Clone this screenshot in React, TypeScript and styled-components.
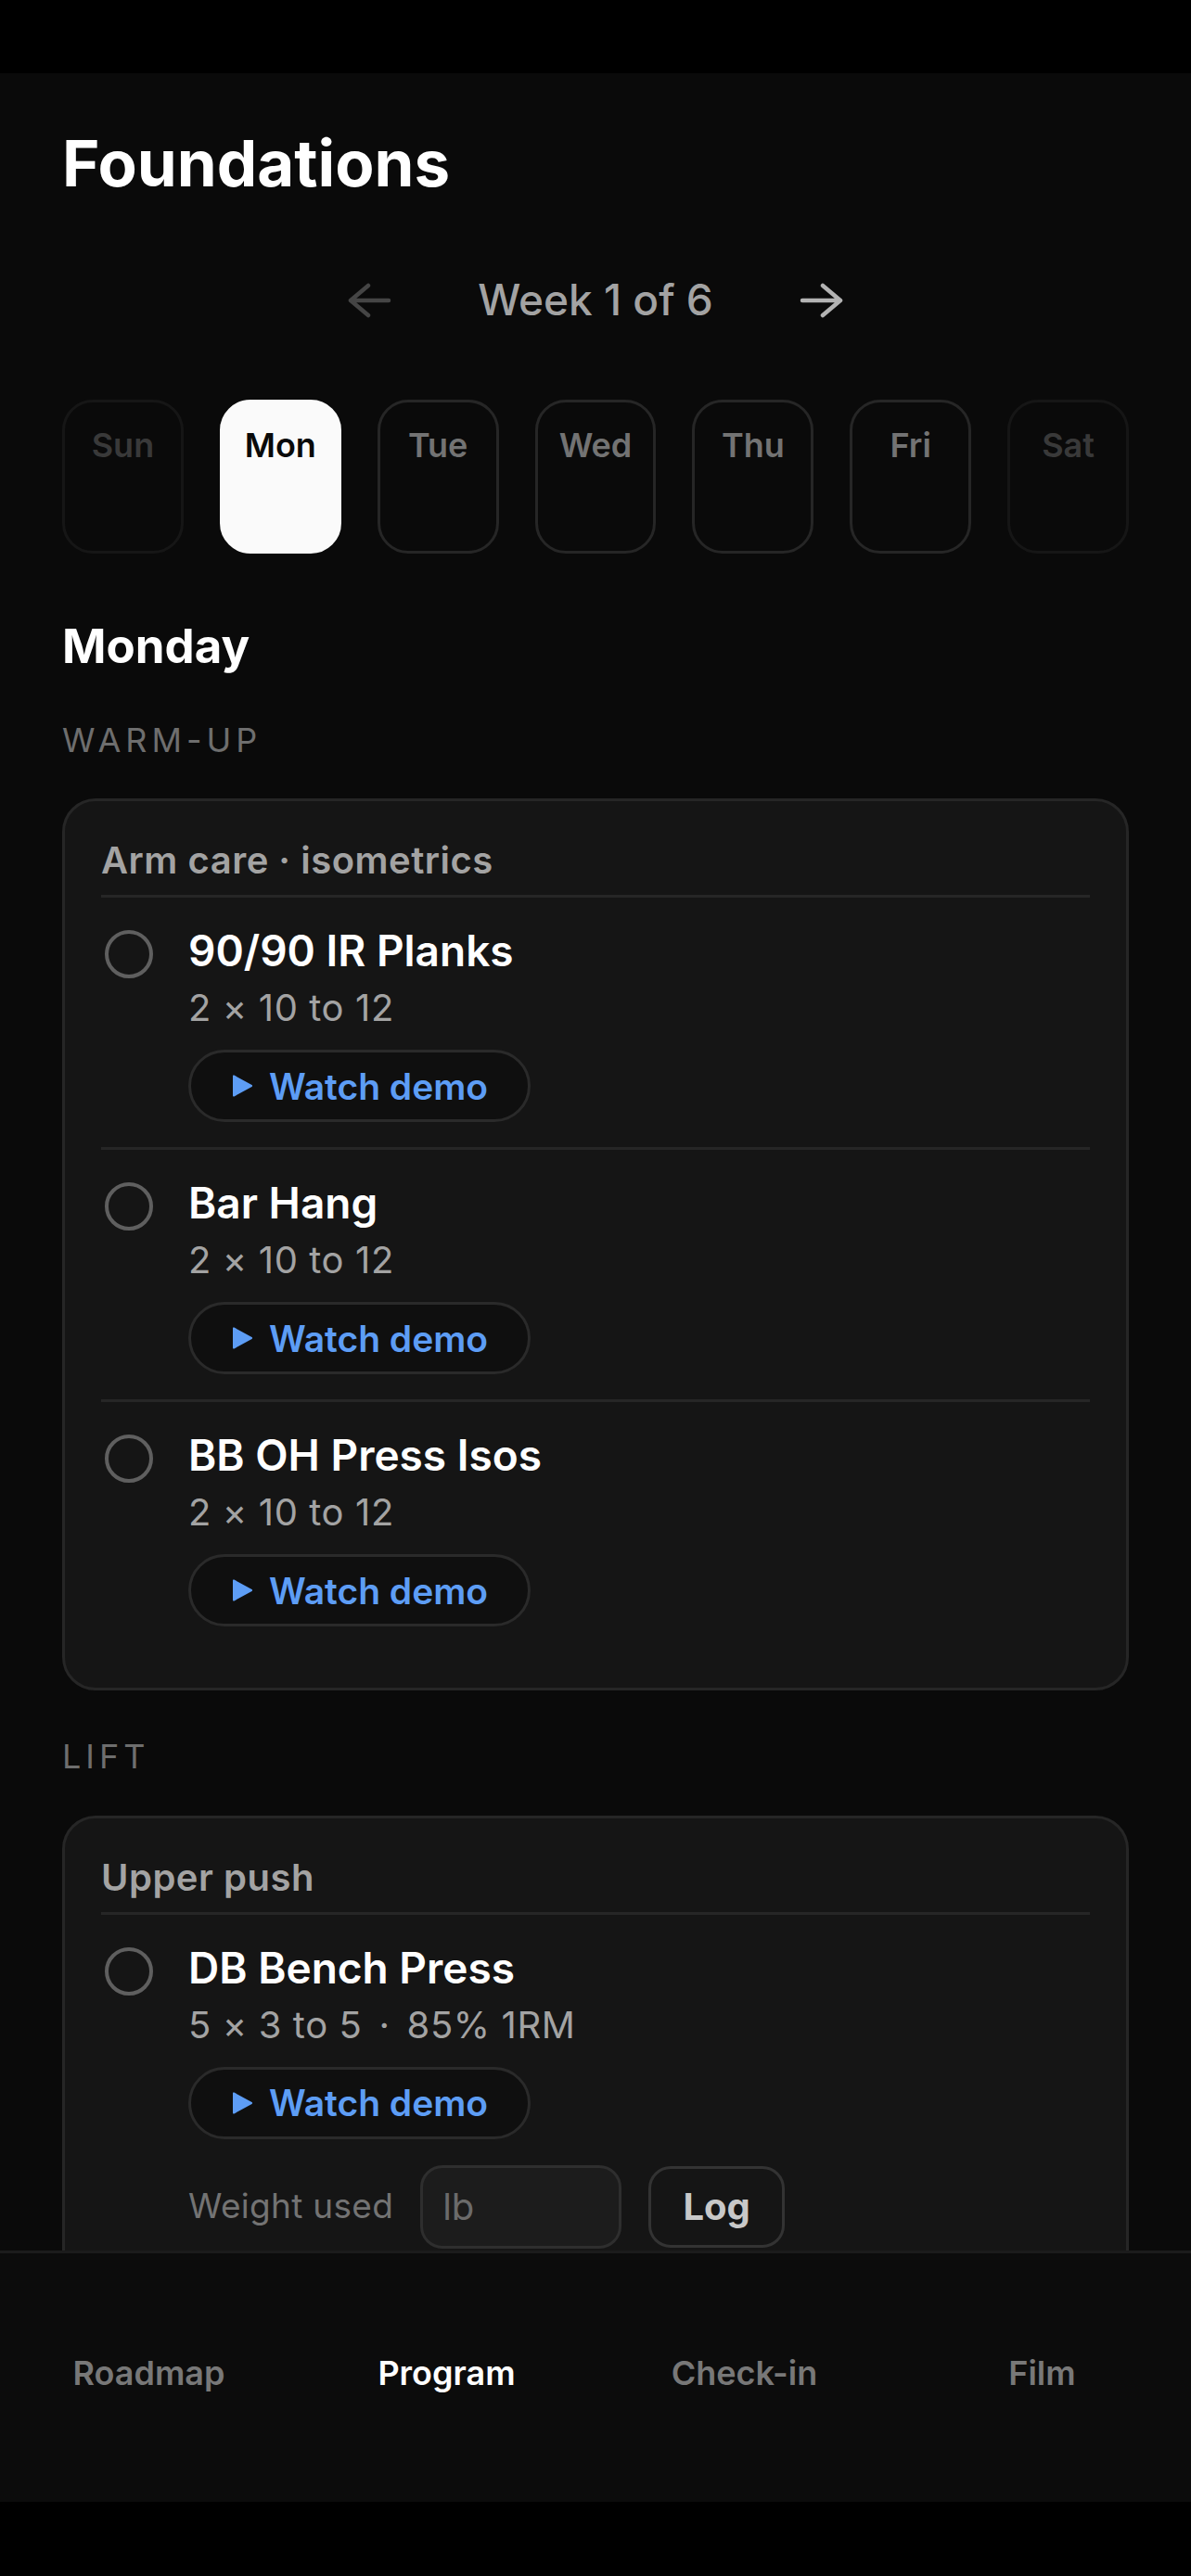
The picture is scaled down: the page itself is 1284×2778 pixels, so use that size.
import React from 'react';
import styled, { createGlobalStyle } from 'styled-components';

const GlobalStyle = createGlobalStyle`
  html, body {
    margin: 0;
    padding: 0;
    background: #000;
  }
  body {
    font-family: Inter, "Noto Sans", "Liberation Sans", sans-serif;
    -webkit-font-smoothing: antialiased;
  }
  * {
    box-sizing: border-box;
  }
`;

const Screen = styled.div`
  width: 1284px;
  height: 2778px;
  display: flex;
  flex-direction: column;
  background: #000;
  overflow: hidden;
`;

const StatusBar = styled.div`
  height: 79px;
  flex-shrink: 0;
  background: #000;
`;

const Scroll = styled.main`
  flex: 1;
  min-height: 0;
  overflow: hidden;
  background: #0a0a0a;
  padding: 57px 67px 0;
`;

const Title = styled.h1`
  margin: 0;
  font-size: 69px;
  line-height: 81px;
  font-weight: 700;
  color: #fff;
`;

const WeekNav = styled.div`
  margin-top: 79px;
  height: 55px;
  display: flex;
  align-items: center;
  justify-content: center;
  gap: 93px;
`;

const WeekLabel = styled.span`
  font-size: 46px;
  line-height: 1.2;
  font-weight: 500;
  color: #a3a3a3;
`;

const ArrowButton = styled.button<{ $disabled?: boolean }>`
  width: 47px;
  height: 38px;
  padding: 0;
  border: 0;
  background: none;
  display: flex;
  color: ${(p) => (p.$disabled ? '#454545' : '#b3b3b3')};
`;

const DayGrid = styled.div`
  margin-top: 80px;
  display: grid;
  grid-template-columns: repeat(7, 1fr);
  gap: 39px;
`;

const DayPill = styled.div<{ $active?: boolean; $muted?: boolean }>`
  height: 166px;
  border-radius: 33px;
  border: 3px solid ${(p) => (p.$active ? '#fafafa' : '#262626')};
  background: ${(p) => (p.$active ? '#fafafa' : 'transparent')};
  color: ${(p) => (p.$active ? '#0a0a0a' : '#737373')};
  opacity: ${(p) => (p.$muted ? 0.45 : 1)};
  display: flex;
  justify-content: center;
  padding-top: 25px;
  font-size: 36px;
  line-height: 1.2;
  font-weight: 600;
`;

const DayTitle = styled.h2`
  margin: 69px 0 0;
  font-size: 51px;
  line-height: 1.2;
  font-weight: 700;
  color: #fff;
`;

const SectionLabel = styled.div`
  margin: 50px 0 41px;
  font-size: 36px;
  line-height: 1.2;
  font-weight: 400;
  letter-spacing: 5px;
  color: #6e6e6e;
  text-transform: uppercase;
`;

const Card = styled.section`
  border: 3px solid #262626;
  border-radius: 36px;
  background: #151515;
  padding: 40px 39px 39px;
`;

const CardHeader = styled.div`
  font-size: 40px;
  line-height: 47px;
  font-weight: 600;
  letter-spacing: 0.5px;
  color: #a3a3a3;
  padding-bottom: 14px;
  border-bottom: 3px solid #262626;
`;

const Row = styled.div`
  display: flex;
  gap: 38px;
  padding: 30px 0 27px 4px;
  border-bottom: 3px solid #262626;

  &:last-child {
    border-bottom: 0;
  }
`;

const Check = styled.span`
  width: 52px;
  height: 52px;
  margin-top: 5px;
  flex-shrink: 0;
  border-radius: 50%;
  border: 4.5px solid #5f5f5f;
`;

const RowBody = styled.div`
  display: flex;
  flex-direction: column;
  align-items: flex-start;
`;

const ExName = styled.div`
  font-size: 46px;
  line-height: 54px;
  font-weight: 600;
  color: #fff;
`;

const ExSets = styled.div`
  margin-top: 11px;
  font-size: 40px;
  line-height: 47px;
  letter-spacing: 0.6px;
  color: #a3a3a3;
`;

const Dot = styled.span`
  padding: 0 18px;
`;

const DemoButton = styled.button`
  margin-top: 22px;
  height: 78px;
  padding: 0 43px;
  display: inline-flex;
  align-items: center;
  gap: 16px;
  border: 3px solid #2a2a2a;
  border-radius: 39px;
  background: #0f0f0f;
  color: #5d9df5;
  font-family: inherit;
  font-size: 39px;
  font-weight: 600;
`;

const WeightRow = styled.div`
  margin-top: 28px;
  display: flex;
  align-items: center;
  gap: 29px;
`;

const WeightLabel = styled.span`
  font-size: 37px;
  line-height: 1.2;
  letter-spacing: 0.3px;
  color: #737373;
`;

const WeightInput = styled.input`
  width: 217px;
  height: 90px;
  padding: 0 21px;
  border: 3px solid #2e2e2e;
  border-radius: 24px;
  background: #1c1c1c;
  color: #fff;
  font-family: inherit;
  font-size: 40px;
  outline: none;

  &::placeholder {
    color: #6b6b6b;
  }
`;

const LogButton = styled.button`
  width: 147px;
  height: 88px;
  border: 3px solid #333;
  border-radius: 24px;
  background: transparent;
  color: #c8c8c8;
  font-family: inherit;
  font-size: 40px;
  font-weight: 700;
`;

const TabBar = styled.nav`
  height: 271px;
  flex-shrink: 0;
  display: grid;
  grid-template-columns: repeat(4, 1fr);
  align-items: center;
  padding-bottom: 10px;
  background: #0c0c0c;
  border-top: 3px solid #1c1c1c;
`;

const Tab = styled.span<{ $active?: boolean }>`
  text-align: center;
  font-size: 36px;
  font-weight: 600;
  color: ${(p) => (p.$active ? '#fff' : '#787878')};
`;

const HomeArea = styled.div`
  height: 80px;
  flex-shrink: 0;
  background: #000;
`;

const Arrow = ({ dir }: { dir: 'left' | 'right' }) => (
  <svg width="47" height="38" viewBox="0 0 47 38" fill="none" stroke="currentColor" strokeWidth="4.5" strokeLinecap="round" strokeLinejoin="round">
    {dir === 'left' ? (
      <path d="M44 19H3M22 3L3 19l19 16" />
    ) : (
      <path d="M3 19h41M25 3l19 16-19 16" />
    )}
  </svg>
);

const Play = () => (
  <svg width="25" height="24" viewBox="0 0 25 24" fill="currentColor">
    <path d="M2 1.5v21a1 1 0 0 0 1.5.9l19-10.5a1 1 0 0 0 0-1.8L3.5.6A1 1 0 0 0 2 1.5z" />
  </svg>
);

type Exercise = { name: string; sets: string; load?: string; logWeight?: boolean };

const days = [
  { label: 'Sun', muted: true },
  { label: 'Mon', active: true },
  { label: 'Tue' },
  { label: 'Wed' },
  { label: 'Thu' },
  { label: 'Fri' },
  { label: 'Sat', muted: true },
];

const warmUp: Exercise[] = [
  { name: '90/90 IR Planks', sets: '2 × 10 to 12' },
  { name: 'Bar Hang', sets: '2 × 10 to 12' },
  { name: 'BB OH Press Isos', sets: '2 × 10 to 12' },
];

const lift: Exercise[] = [
  { name: 'DB Bench Press', sets: '5 × 3 to 5', load: '85% 1RM', logWeight: true },
];

const ExerciseRow = ({ ex }: { ex: Exercise }) => (
  <Row>
    <Check />
    <RowBody>
      <ExName>{ex.name}</ExName>
      <ExSets>
        {ex.sets}
        {ex.load && (
          <>
            <Dot>·</Dot>
            {ex.load}
          </>
        )}
      </ExSets>
      <DemoButton>
        <Play />
        Watch demo
      </DemoButton>
      {ex.logWeight && (
        <WeightRow>
          <WeightLabel>Weight used</WeightLabel>
          <WeightInput placeholder="lb" />
          <LogButton>Log</LogButton>
        </WeightRow>
      )}
    </RowBody>
  </Row>
);

export default function App() {
  return (
    <Screen>
      <GlobalStyle />
      <StatusBar />
      <Scroll>
        <Title>Foundations</Title>
        <WeekNav>
          <ArrowButton $disabled>
            <Arrow dir="left" />
          </ArrowButton>
          <WeekLabel>Week 1 of 6</WeekLabel>
          <ArrowButton>
            <Arrow dir="right" />
          </ArrowButton>
        </WeekNav>
        <DayGrid>
          {days.map((d) => (
            <DayPill key={d.label} $active={d.active} $muted={d.muted}>
              {d.label}
            </DayPill>
          ))}
        </DayGrid>
        <DayTitle>Monday</DayTitle>

        <SectionLabel>Warm-up</SectionLabel>
        <Card>
          <CardHeader>Arm care · isometrics</CardHeader>
          {warmUp.map((ex) => (
            <ExerciseRow key={ex.name} ex={ex} />
          ))}
        </Card>

        <SectionLabel>Lift</SectionLabel>
        <Card>
          <CardHeader>Upper push</CardHeader>
          {lift.map((ex) => (
            <ExerciseRow key={ex.name} ex={ex} />
          ))}
        </Card>
      </Scroll>
      <TabBar>
        <Tab>Roadmap</Tab>
        <Tab $active>Program</Tab>
        <Tab>Check-in</Tab>
        <Tab>Film</Tab>
      </TabBar>
      <HomeArea />
    </Screen>
  );
}
